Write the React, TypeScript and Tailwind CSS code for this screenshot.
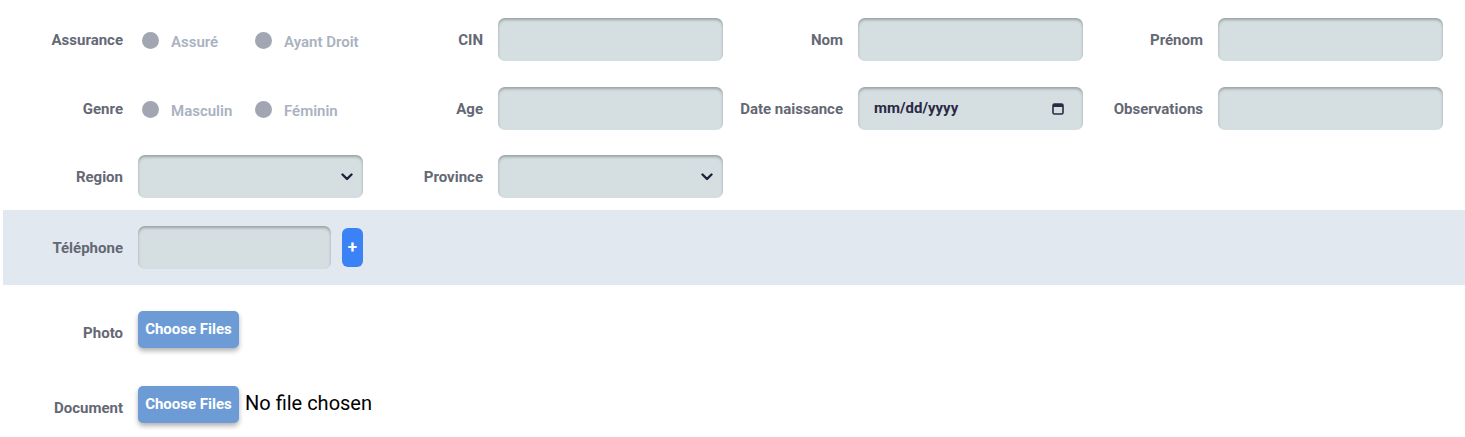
import React from "react";

const labelCls =
  "w-[120px] shrink-0 text-right text-[15px] font-bold text-[#646874] pr-0";
const inputCls =
  "w-[225px] h-[43px] rounded-[7px] bg-[#d5dfe1] shadow-[inset_0_2px_3px_rgba(0,0,0,0.28)] border-0 outline-none px-3 text-[14px]";

function Field({ label, children }: { label: string; children: React.ReactNode }) {
  return (
    <div className="flex items-center w-[360px] gap-[15px]">
      <div className={`${labelCls} pt-[2px]`}>{label}</div>
      {children}
    </div>
  );
}

function Radio({ label, wide }: { label: string; wide?: boolean }) {
  return (
    <div className={`flex items-center gap-[12px] pt-[4px] ${wide ? "w-[113px]" : ""}`}>
      <span className="w-[17px] h-[17px] rounded-full bg-[#a2a6b3] shrink-0 -mt-[2px]" />
      <span className="text-[15px] font-semibold text-[#a9b2c0] pt-[1px]">{label}</span>
    </div>
  );
}

function Select() {
  return (
    <div className={`${inputCls} flex items-center justify-end pr-[10px]`}>
      <svg width="12" height="8" viewBox="0 0 12 8">
        <path d="M1.5 1.5 L6 6 L10.5 1.5" fill="none" stroke="#22223a" strokeWidth="2.4" strokeLinecap="round" strokeLinejoin="round" />
      </svg>
    </div>
  );
}

function ChooseBtn() {
  return (
    <div className="h-[37px] w-[101px] rounded-[5px] bg-[#6c9bd6] text-white text-[15px] font-bold flex items-center justify-center shadow-[0_3px_5px_rgba(0,0,0,0.3)]">
      Choose Files
    </div>
  );
}

export default function App() {
  return (
    <div className="w-[1465px] h-[437px] bg-white overflow-hidden" style={{ fontFamily: "Roboto, 'Liberation Sans', sans-serif" }}>
      <div className="pt-[18px] pl-[3px]">
        <div className="flex h-[43px]">
          <Field label="Assurance">
            <div className="flex items-center pl-[4px]">
              <Radio label="Assuré" wide />
              <Radio label="Ayant Droit" />
            </div>
          </Field>
          <Field label="CIN">
            <div className={inputCls} />
          </Field>
          <Field label="Nom">
            <div className={inputCls} />
          </Field>
          <Field label="Prénom">
            <div className={inputCls} />
          </Field>
        </div>
        <div className="flex h-[43px] mt-[26px]">
          <Field label="Genre">
            <div className="flex items-center pl-[4px]">
              <Radio label="Masculin" wide />
              <Radio label="Féminin" />
            </div>
          </Field>
          <Field label="Age">
            <div className={inputCls} />
          </Field>
          <Field label="Date naissance">
            <div className={`${inputCls} flex items-center justify-between pl-[16px] pr-[19px]`}>
              <span className="text-[15px] font-bold text-[#2b2a45]">mm/dd/yyyy</span>
              <svg width="12" height="13" viewBox="0 0 12 13">
                <rect x="1" y="2" width="10" height="10" rx="1.5" fill="none" stroke="#2b2a45" strokeWidth="1.6" />
                <rect x="1" y="2" width="10" height="3" fill="#2b2a45" />
              </svg>
            </div>
          </Field>
          <Field label="Observations">
            <div className={inputCls} />
          </Field>
        </div>
        <div className="flex h-[43px] mt-[25px]">
          <Field label="Region">
            <Select />
          </Field>
          <Field label="Province">
            <Select />
          </Field>
        </div>
      </div>
      <div className="ml-[3px] mt-[12px] h-[75px] bg-[#e2e8f0] flex items-center">
        <div className="flex items-center gap-[15px]">
          <div className={`${labelCls} pt-[2px]`}>Téléphone</div>
          <div className="w-[193px] h-[43px] rounded-[7px] bg-[#d5dfe1] shadow-[inset_0_2px_3px_rgba(0,0,0,0.28)]" />
          <div className="w-[21px] h-[39px] -ml-[4px] rounded-[6px] bg-[#3b82f6] text-white font-bold text-[17px] flex items-center justify-center">
            +
          </div>
        </div>
      </div>
      <div className="pl-[3px] mt-[26px] flex items-center gap-[15px]">
        <div className={`${labelCls} pt-[8px]`}>Photo</div>
        <ChooseBtn />
      </div>
      <div className="pl-[3px] mt-[38px] flex items-center gap-[15px]">
        <div className={`${labelCls} pt-[7px]`}>Document</div>
        <div className="flex items-center gap-[6px]">
          <ChooseBtn />
          <span className="text-[20px] text-black -mt-[4px]">No file chosen</span>
        </div>
      </div>
    </div>
  );
}
